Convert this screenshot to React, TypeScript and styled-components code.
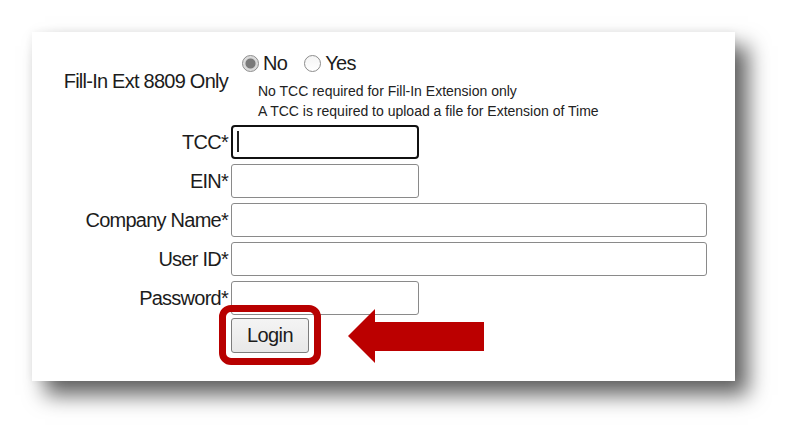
import React from 'react';
import styled, { createGlobalStyle } from 'styled-components';

const GlobalStyle = createGlobalStyle`
  html, body {
    margin: 0;
    padding: 0;
    background: #ffffff;
  }
  body {
    font-family: 'Liberation Sans', Arial, sans-serif;
    color: #1c1c1c;
  }
`;

const Page = styled.div`
  width: 800px;
  height: 447px;
  padding: 32px 0 0 32px;
  box-sizing: border-box;
  overflow: hidden;
`;

const Card = styled.div`
  width: 703px;
  height: 349px;
  box-sizing: border-box;
  background: #ffffff;
  box-shadow: 13px 14px 20px rgba(0, 0, 0, 0.62), 0 0 8px rgba(0, 0, 0, 0.06);
  padding-top: 20px;
  overflow: hidden;
`;

const Form = styled.div`
  display: grid;
  grid-template-columns: 196px 1fr;
  column-gap: 3px;
  row-gap: 5px;
`;

const Label = styled.label<{ $top?: number }>`
  font-size: 20px;
  letter-spacing: -0.75px;
  text-align: right;
  align-self: ${(p) => (p.$top !== undefined ? 'start' : 'center')};
  padding-top: ${(p) => p.$top ?? 0}px;
  white-space: nowrap;
`;

const Options = styled.div`
  padding-left: 11px;
  margin-bottom: -1px;
`;

const RadioRow = styled.div`
  display: flex;
  align-items: center;
  gap: 4px;
  font-size: 20px;
  letter-spacing: -0.7px;
  height: 22px;
`;

const Radio = styled.span<{ $checked?: boolean }>`
  width: 17px;
  height: 17px;
  box-sizing: border-box;
  border-radius: 50%;
  border: 1px solid #8c8c8c;
  background: ${(p) =>
    p.$checked
      ? 'radial-gradient(circle, #7a7a7a 0 4.5px, #d6d6d6 5.5px, #f2f2f2 100%)'
      : 'linear-gradient(#f4f4f4, #ffffff)'};
  flex: none;
`;

const OptionText = styled.span<{ $gap?: number }>`
  margin-right: ${(p) => p.$gap ?? 0}px;
`;

const Notes = styled.div`
  padding-left: 16px;
  margin-top: 7px;
  font-size: 14px;
  line-height: 20px;
  color: #222;
`;

const Field = styled.div`
  position: relative;
  height: 34px;
`;

const Input = styled.input<{ $wide?: boolean; $focused?: boolean }>`
  display: block;
  box-sizing: border-box;
  width: ${(p) => (p.$wide ? 476 : 188)}px;
  height: 34px;
  margin: 0;
  padding: 0 6px;
  background: #fff;
  border: ${(p) => (p.$focused ? '2.5px solid #111' : '1px solid #8a8a8a')};
  border-radius: ${(p) => (p.$focused ? 4 : 3)}px;
  outline: none;
  font-size: 18px;
`;

const Caret = styled.span`
  position: absolute;
  left: 6px;
  top: 6px;
  width: 1.5px;
  height: 21px;
  background: #222;
`;

const ButtonRow = styled.div`
  grid-column: 2;
  position: relative;
  margin-top: -2px;
  height: 35px;
`;

const LoginButton = styled.button`
  position: relative;
  width: 78px;
  height: 35px;
  box-sizing: border-box;
  border: 1px solid #7d7d7d;
  border-radius: 3px;
  background: linear-gradient(#f4f4f4, #e8e8e8);
  font-family: inherit;
  font-size: 20px;
  letter-spacing: -0.6px;
  color: #1c1c1c;
  padding: 0;
  z-index: 1;
`;

const Highlight = styled.span`
  position: absolute;
  left: -12px;
  top: -13px;
  width: 102px;
  height: 60px;
  box-sizing: border-box;
  border: 7px solid #b80000;
  border-radius: 12px;
  z-index: 2;
`;

const Arrow = styled.svg`
  position: absolute;
  left: 117px;
  top: -9px;
  z-index: 2;
`;

export default function App() {
  return (
    <>
      <GlobalStyle />
      <Page>
        <Card>
          <Form>
            <Label $top={18}>Fill-In Ext 8809 Only</Label>
            <Options>
              <RadioRow>
                <Radio $checked />
                <OptionText $gap={13}>No</OptionText>
                <Radio />
                <OptionText>Yes</OptionText>
              </RadioRow>
              <Notes>
                <div>No TCC required for Fill-In Extension only</div>
                <div>A TCC is required to upload a file for Extension of Time</div>
              </Notes>
            </Options>

            <Label>TCC*</Label>
            <Field>
              <Input $focused readOnly />
              <Caret />
            </Field>

            <Label>EIN*</Label>
            <Field>
              <Input readOnly />
            </Field>

            <Label>Company Name*</Label>
            <Field>
              <Input $wide readOnly />
            </Field>

            <Label>User ID*</Label>
            <Field>
              <Input $wide readOnly />
            </Field>

            <Label>Password*</Label>
            <Field>
              <Input type="password" readOnly />
            </Field>

            <ButtonRow>
              <LoginButton type="button">Login</LoginButton>
              <Highlight />
              <Arrow width="136" height="54" viewBox="0 0 136 54">
                <polygon points="0,27 27,0 27,13 136,13 136,42 27,42 27,54" fill="#bb0000" />
              </Arrow>
            </ButtonRow>
          </Form>
        </Card>
      </Page>
    </>
  );
}
